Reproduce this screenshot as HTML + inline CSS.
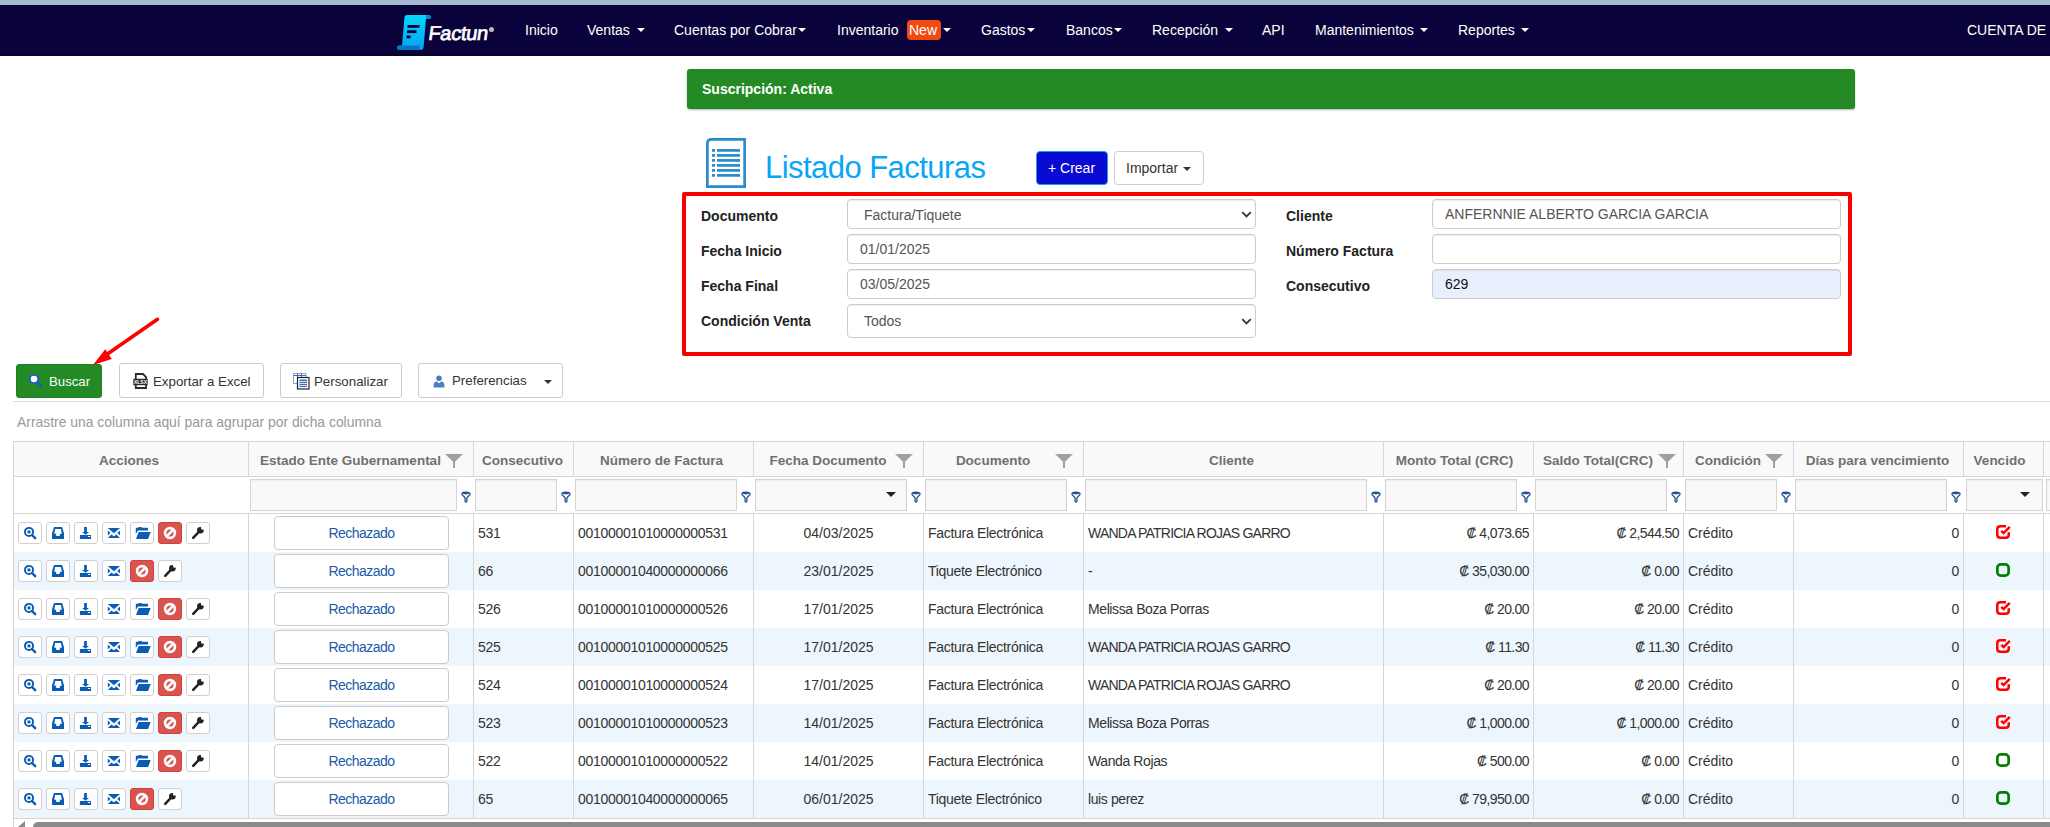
<!DOCTYPE html>
<html><head><meta charset="utf-8"><title>Listado Facturas</title>
<style>
html,body{margin:0;padding:0}
body{width:2050px;height:827px;overflow:hidden;position:relative;background:#fff;font-family:"Liberation Sans",sans-serif;color:#333}
.a{position:absolute;white-space:nowrap}
.a>svg,.ab>svg{display:block}
.nav{color:#fff;font-size:14px;line-height:16px}
.lbl{font-size:14px;font-weight:bold;color:#222;line-height:16px}
.inp{position:absolute;box-sizing:border-box;border:1px solid #ccc;border-radius:4px;background:#fff;box-shadow:inset 0 1px 1px rgba(0,0,0,.075);font-size:14px;color:#555;line-height:16px}
.btn{position:absolute;box-sizing:border-box;border:1px solid #ccc;border-radius:4px;background:#fff}
.hd{font-size:13.5px;font-weight:bold;color:#707070;line-height:16px}
.cell{font-size:14px;color:#333;line-height:16px;letter-spacing:-0.3px}
.ab{position:absolute;box-sizing:border-box;width:24px;height:22px;border:1px solid #d0d0d0;border-radius:3px;background:#fff;display:flex;align-items:center;justify-content:center}
.ab.r{background:#d9534f;border-color:#d43f3a}
.fi{position:absolute;box-sizing:border-box;border:1px solid #d5d5d5;background:#f9f9f9;box-shadow:inset 0 1px 2px rgba(0,0,0,.06);height:32px;top:479px}
</style></head><body>

<div class="a" style="left:0;top:0;width:2050px;height:5px;background:#a7b8d2"></div>
<div class="a" style="left:0;top:5px;width:2050px;height:50px;background:#0a033b"></div>
<div class="a" style="left:0;top:55px;width:2050px;height:1px;background:#05021c"></div>
<svg class="a" style="left:396px;top:14px" width="36" height="37" viewBox="0 0 36 37">
<defs><linearGradient id="lg" x1="0" y1="0" x2="0" y2="1"><stop offset="0" stop-color="#00d8ff"/><stop offset="1" stop-color="#0aa0f0"/></linearGradient></defs>
<path d="M8.5 3 Q9 1 11 1 L32 1 Q35 1 35 3.5 Q35 4.8 33 4.8 L30 4.8 L27.5 34 Q27 36 24.5 36 L4 36 Q1 36 1 33.8 Q1 31.5 4 31.5 L6 31.5 Z" fill="url(#lg)"/>
<path d="M1 33.8 Q1 31.5 4 31.5 L24 31.5 Q22 33 24.5 36 L4 36 Q1 36 1 33.8 Z" fill="#0872c4"/>
<path d="M30 1 Q35 1 35 3.5 Q35 4.8 33 4.8 L30 4.8 Z" fill="#0a86c8"/>
<rect x="11.5" y="11" width="12" height="2.8" fill="#0a033b"/>
<rect x="11" y="16.3" width="9.5" height="2.8" fill="#0a033b"/>
<rect x="10.5" y="21.5" width="4" height="2.8" fill="#0a033b"/>
</svg>
<div class="a" style="left:427px;top:21px;font-size:20px;line-height:24px;font-weight:normal;color:#fff;letter-spacing:-0.3px;-webkit-text-stroke:0.7px #fff;transform:skewX(-8deg);transform-origin:0 100%">Factun</div>
<div class="a" style="left:489px;top:27px;width:5px;height:5px;border-radius:50%;background:#b8b8cc"></div>
<div class="a nav" style="left:525px;top:22px">Inicio</div>
<div class="a nav" style="left:587px;top:22px">Ventas</div>
<div class="a" style="left:637px;top:28px;width:0;height:0;border-left:4.0px solid transparent;border-right:4.0px solid transparent;border-top:4px solid #fff"></div>
<div class="a nav" style="left:674px;top:22px">Cuentas por Cobrar</div>
<div class="a" style="left:798px;top:28px;width:0;height:0;border-left:4.0px solid transparent;border-right:4.0px solid transparent;border-top:4px solid #fff"></div>
<div class="a nav" style="left:837px;top:22px">Inventario</div>
<div class="a" style="left:943px;top:28px;width:0;height:0;border-left:4.0px solid transparent;border-right:4.0px solid transparent;border-top:4px solid #fff"></div>
<div class="a nav" style="left:981px;top:22px">Gastos</div>
<div class="a" style="left:1027px;top:28px;width:0;height:0;border-left:4.0px solid transparent;border-right:4.0px solid transparent;border-top:4px solid #fff"></div>
<div class="a nav" style="left:1066px;top:22px">Bancos</div>
<div class="a" style="left:1114px;top:28px;width:0;height:0;border-left:4.0px solid transparent;border-right:4.0px solid transparent;border-top:4px solid #fff"></div>
<div class="a nav" style="left:1152px;top:22px">Recepción</div>
<div class="a" style="left:1225px;top:28px;width:0;height:0;border-left:4.0px solid transparent;border-right:4.0px solid transparent;border-top:4px solid #fff"></div>
<div class="a nav" style="left:1262px;top:22px">API</div>
<div class="a nav" style="left:1315px;top:22px">Mantenimientos</div>
<div class="a" style="left:1420px;top:28px;width:0;height:0;border-left:4.0px solid transparent;border-right:4.0px solid transparent;border-top:4px solid #fff"></div>
<div class="a nav" style="left:1458px;top:22px">Reportes</div>
<div class="a" style="left:1521px;top:28px;width:0;height:0;border-left:4.0px solid transparent;border-right:4.0px solid transparent;border-top:4px solid #fff"></div>
<div class="a" style="left:907px;top:20px;width:34px;height:20px;border-radius:4px;background:#f04a12"></div>
<div class="a nav" style="left:909px;top:22px">New</div>
<div class="a nav" style="left:1967px;top:22px">CUENTA DE</div>
<div class="a" style="left:687px;top:69px;width:1168px;height:40px;background:#248a24;border-radius:3px;box-shadow:0 1px 2px rgba(0,0,0,.3)"></div>
<div class="a" style="left:702px;top:81px;font-size:14px;font-weight:bold;color:#fff;line-height:16px">Suscripción: Activa</div>
<svg class="a" style="left:706px;top:138px" width="40" height="50" viewBox="0 0 40 50"><path d="M1.35 48.65 V5.5 Q1.35 1.35 5.5 1.35 H38.65 V48.65 Z" fill="none" stroke="#2a8ad0" stroke-width="2.7"/><rect x="6" y="11.05" width="3" height="2.7" fill="#2a8ad0"/><rect x="11" y="11.05" width="23" height="2.7" fill="#2a8ad0"/><rect x="6" y="16.05" width="3" height="2.7" fill="#2a8ad0"/><rect x="11" y="16.05" width="23" height="2.7" fill="#2a8ad0"/><rect x="6" y="21.05" width="3" height="2.7" fill="#2a8ad0"/><rect x="11" y="21.05" width="23" height="2.7" fill="#2a8ad0"/><rect x="6" y="26.05" width="3" height="2.7" fill="#2a8ad0"/><rect x="11" y="26.05" width="23" height="2.7" fill="#2a8ad0"/><rect x="6" y="31.05" width="3" height="2.7" fill="#2a8ad0"/><rect x="11" y="31.05" width="23" height="2.7" fill="#2a8ad0"/><rect x="6" y="36.05" width="3" height="2.7" fill="#2a8ad0"/><rect x="11" y="36.05" width="23" height="2.7" fill="#2a8ad0"/></svg>
<div class="a" style="left:765px;top:150px;font-size:31px;line-height:36px;letter-spacing:-0.55px;color:#08a6f6">Listado Facturas</div>
<div class="btn" style="left:1036px;top:151px;width:72px;height:34px;background:#0a0ad0;border-color:#1aa0e0;border-radius:4px"></div>
<div class="a" style="left:1048px;top:160px;font-size:14px;line-height:16px;color:#fff">+ Crear</div>
<div class="btn" style="left:1114px;top:151px;width:90px;height:34px"></div>
<div class="a" style="left:1126px;top:160px;font-size:14px;line-height:16px;color:#333">Importar</div>
<div class="a" style="left:1183px;top:167px;width:0;height:0;border-left:4.0px solid transparent;border-right:4.0px solid transparent;border-top:4px solid #333"></div>
<div class="a" style="left:682px;top:192px;width:1170px;height:164px;box-sizing:border-box;border:4px solid #fa0000;border-radius:2px"></div>
<div class="a lbl" style="left:701px;top:208px">Documento</div>
<div class="a lbl" style="left:701px;top:243px">Fecha Inicio</div>
<div class="a lbl" style="left:701px;top:278px">Fecha Final</div>
<div class="a lbl" style="left:701px;top:313px">Condición Venta</div>
<div class="a lbl" style="left:1286px;top:208px">Cliente</div>
<div class="a lbl" style="left:1286px;top:243px">Número Factura</div>
<div class="a lbl" style="left:1286px;top:278px">Consecutivo</div>
<div class="inp" style="left:847px;top:199px;width:409px;height:30px"></div>
<div class="a" style="left:864px;top:207px;font-size:14px;line-height:16px;color:#555">Factura/Tiquete</div>
<svg class="a" width="11" height="7" viewBox="0 0 11 7" style="left:1241px;top:211px"><path d="M1.2 1.2 L5.5 5.5 L9.8 1.2" fill="none" stroke="#3a3a3a" stroke-width="1.9"/></svg>
<div class="inp" style="left:847px;top:234px;width:409px;height:30px"></div>
<div class="a" style="left:860px;top:241px;font-size:14px;line-height:16px;color:#555">01/01/2025</div>
<div class="inp" style="left:847px;top:269px;width:409px;height:30px"></div>
<div class="a" style="left:860px;top:276px;font-size:14px;line-height:16px;color:#555">03/05/2025</div>
<div class="inp" style="left:847px;top:304px;width:409px;height:34px"></div>
<div class="a" style="left:864px;top:313px;font-size:14px;line-height:16px;color:#555">Todos</div>
<svg class="a" width="11" height="7" viewBox="0 0 11 7" style="left:1241px;top:318px"><path d="M1.2 1.2 L5.5 5.5 L9.8 1.2" fill="none" stroke="#3a3a3a" stroke-width="1.9"/></svg>
<div class="inp" style="left:1432px;top:199px;width:409px;height:30px"></div>
<div class="a" style="left:1445px;top:206px;font-size:14px;line-height:16px;color:#555">ANFERNNIE ALBERTO GARCIA GARCIA</div>
<div class="inp" style="left:1432px;top:234px;width:409px;height:30px"></div>
<div class="inp" style="left:1432px;top:269px;width:409px;height:30px;background:#e8f0fe"></div>
<div class="a" style="left:1445px;top:276px;font-size:14px;line-height:16px;color:#111">629</div>
<svg class="a" style="left:80px;top:310px" width="90" height="65" viewBox="0 0 90 65"><path d="M77.5 9.3 L26 45" stroke="#ff0000" stroke-width="3.6" stroke-linecap="round"/><path d="M13 55 L25.3 39.3 L31.8 49.1 Z" fill="#ff0000"/></svg>
<div class="btn" style="left:16px;top:364px;width:86px;height:34px;background:#238a25;border-color:#1f8022;border-radius:3px"></div>
<svg class="a" style="left:28px;top:373px" width="15" height="15" viewBox="0 0 15 15"><circle cx="6" cy="6" r="4.2" fill="#fff" stroke="#2255cc" stroke-width="1.8"/><path d="M9.2 9.2 L13.5 13.3" stroke="#2255cc" stroke-width="2.2" stroke-linecap="round"/></svg>
<div class="a" style="left:49px;top:374px;font-size:13.2px;line-height:16px;color:#fff">Buscar</div>
<div class="btn" style="left:119px;top:363px;width:145px;height:35px;border-radius:3px"></div>
<svg class="a" style="left:133px;top:373px" width="15" height="16" viewBox="0 0 15 16"><path d="M2.8 1 H10 L13 4 V15 H2.8 Z" fill="#fff" stroke="#2a2a2a" stroke-width="1.8"/><rect x="0.3" y="5.8" width="14.4" height="6.4" fill="#2a2a2a"/><text x="7.5" y="11.2" font-size="6" font-family="Liberation Sans" font-weight="bold" fill="#fff" text-anchor="middle" textLength="13" lengthAdjust="spacingAndGlyphs">XLSX</text></svg>
<div class="a" style="left:153px;top:374px;font-size:13.3px;line-height:16px;color:#333">Exportar a Excel</div>
<div class="btn" style="left:280px;top:363px;width:122px;height:35px;border-radius:3px"></div>
<svg class="a" style="left:293px;top:373px" width="17" height="17" viewBox="0 0 17 17"><rect x="0.5" y="0.5" width="12.5" height="10" fill="#fff" stroke="#8aa8d8"/><path d="M0.5 2.5 H13 M4.5 0.5 V10.5 M8.5 0.5 V10.5" stroke="#3a6fb0" stroke-width="1"/><rect x="4.5" y="4.5" width="11.5" height="11.5" fill="#fff" stroke="#222" stroke-width="1.2"/><rect x="6.5" y="6.5" width="7.5" height="7.5" fill="#3a6fb0"/><path d="M6.5 8.5 H14 M6.5 10.5 H14 M6.5 12.5 H14" stroke="#fff" stroke-width="0.8"/></svg>
<div class="a" style="left:314px;top:374px;font-size:13.3px;line-height:16px;color:#333">Personalizar</div>
<div class="btn" style="left:418px;top:363px;width:145px;height:35px;border-radius:3px"></div>
<svg class="a" style="left:433px;top:374px" width="12" height="14" viewBox="0 0 12 14"><circle cx="6" cy="4.3" r="2.8" fill="#4a80c2"/><path d="M0.6 13.6 V11.6 Q0.6 7.6 3.6 7.4 L6 9.2 L8.4 7.4 Q11.4 7.6 11.4 11.6 V13.6 Z" fill="#4a80c2"/></svg>
<div class="a" style="left:452px;top:373px;font-size:13.3px;line-height:16px;color:#333">Preferencias</div>
<div class="a" style="left:544px;top:380px;width:0;height:0;border-left:4.0px solid transparent;border-right:4.0px solid transparent;border-top:4px solid #333"></div>
<div class="a" style="left:13px;top:401px;width:2037px;height:1px;background:#ddd"></div>
<div class="a" style="left:17px;top:414px;font-size:13.9px;line-height:16px;color:#999">Arrastre una columna aquí para agrupar por dicha columna</div>
<div class="a" style="left:13px;top:441px;width:2037px;height:36px;background:#f9f9f9"></div>
<div class="a" style="left:13px;top:441px;width:2037px;height:1px;background:#d6d6d6"></div>
<div class="a" style="left:13px;top:476px;width:2037px;height:1px;background:#d6d6d6"></div>
<div class="a" style="left:13px;top:513px;width:2037px;height:1px;background:#d6d6d6"></div>
<div class="a" style="left:14px;top:514px;width:2036px;height:38px;background:#fff"></div>
<div class="a" style="left:14px;top:552px;width:2036px;height:38px;background:#eef6fd"></div>
<div class="a" style="left:14px;top:590px;width:2036px;height:38px;background:#fff"></div>
<div class="a" style="left:14px;top:628px;width:2036px;height:38px;background:#eef6fd"></div>
<div class="a" style="left:14px;top:666px;width:2036px;height:38px;background:#fff"></div>
<div class="a" style="left:14px;top:704px;width:2036px;height:38px;background:#eef6fd"></div>
<div class="a" style="left:14px;top:742px;width:2036px;height:38px;background:#fff"></div>
<div class="a" style="left:14px;top:780px;width:2036px;height:38px;background:#eef6fd"></div>
<div class="a" style="left:13px;top:818px;width:2037px;height:1px;background:#d6d6d6"></div>
<div class="a" style="left:13px;top:441px;width:1px;height:386px;background:#d6d6d6"></div>
<div class="a" style="left:248px;top:441px;width:1px;height:36px;background:#d6d6d6"></div>
<div class="a" style="left:248px;top:513px;width:1px;height:306px;background:#d6d6d6"></div>
<div class="a" style="left:473px;top:441px;width:1px;height:36px;background:#d6d6d6"></div>
<div class="a" style="left:473px;top:513px;width:1px;height:306px;background:#d6d6d6"></div>
<div class="a" style="left:573px;top:441px;width:1px;height:36px;background:#d6d6d6"></div>
<div class="a" style="left:573px;top:513px;width:1px;height:306px;background:#d6d6d6"></div>
<div class="a" style="left:753px;top:441px;width:1px;height:36px;background:#d6d6d6"></div>
<div class="a" style="left:753px;top:513px;width:1px;height:306px;background:#d6d6d6"></div>
<div class="a" style="left:923px;top:441px;width:1px;height:36px;background:#d6d6d6"></div>
<div class="a" style="left:923px;top:513px;width:1px;height:306px;background:#d6d6d6"></div>
<div class="a" style="left:1083px;top:441px;width:1px;height:36px;background:#d6d6d6"></div>
<div class="a" style="left:1083px;top:513px;width:1px;height:306px;background:#d6d6d6"></div>
<div class="a" style="left:1383px;top:441px;width:1px;height:36px;background:#d6d6d6"></div>
<div class="a" style="left:1383px;top:513px;width:1px;height:306px;background:#d6d6d6"></div>
<div class="a" style="left:1533px;top:441px;width:1px;height:36px;background:#d6d6d6"></div>
<div class="a" style="left:1533px;top:513px;width:1px;height:306px;background:#d6d6d6"></div>
<div class="a" style="left:1683px;top:441px;width:1px;height:36px;background:#d6d6d6"></div>
<div class="a" style="left:1683px;top:513px;width:1px;height:306px;background:#d6d6d6"></div>
<div class="a" style="left:1793px;top:441px;width:1px;height:36px;background:#d6d6d6"></div>
<div class="a" style="left:1793px;top:513px;width:1px;height:306px;background:#d6d6d6"></div>
<div class="a" style="left:1963px;top:441px;width:1px;height:36px;background:#d6d6d6"></div>
<div class="a" style="left:1963px;top:513px;width:1px;height:306px;background:#d6d6d6"></div>
<div class="a" style="left:2043px;top:441px;width:1px;height:36px;background:#d6d6d6"></div>
<div class="a" style="left:2043px;top:513px;width:1px;height:306px;background:#d6d6d6"></div>
<div class="a hd" style="left:12px;top:453px;width:234px;text-align:center">Acciones</div>
<div class="a hd" style="left:256px;top:453px;width:189px;text-align:center">Estado Ente Gubernamental</div>
<div class="a" style="left:445px;top:454px"><svg width="18" height="14" viewBox="0 0 18 14"><path d="M0 0 H18 L10 7.8 V14 H8 V7.8 Z" fill="#a0a0a0"/></svg></div>
<div class="a hd" style="left:473px;top:453px;width:99px;text-align:center">Consecutivo</div>
<div class="a hd" style="left:572px;top:453px;width:179px;text-align:center">Número de Factura</div>
<div class="a hd" style="left:761px;top:453px;width:134px;text-align:center">Fecha Documento</div>
<div class="a" style="left:895px;top:454px"><svg width="18" height="14" viewBox="0 0 18 14"><path d="M0 0 H18 L10 7.8 V14 H8 V7.8 Z" fill="#a0a0a0"/></svg></div>
<div class="a hd" style="left:931px;top:453px;width:124px;text-align:center">Documento</div>
<div class="a" style="left:1055px;top:454px"><svg width="18" height="14" viewBox="0 0 18 14"><path d="M0 0 H18 L10 7.8 V14 H8 V7.8 Z" fill="#a0a0a0"/></svg></div>
<div class="a hd" style="left:1082px;top:453px;width:299px;text-align:center">Cliente</div>
<div class="a hd" style="left:1380px;top:453px;width:149px;text-align:center">Monto Total (CRC)</div>
<div class="a hd" style="left:1541px;top:453px;width:114px;text-align:center">Saldo Total(CRC)</div>
<div class="a" style="left:1658px;top:454px"><svg width="18" height="14" viewBox="0 0 18 14"><path d="M0 0 H18 L10 7.8 V14 H8 V7.8 Z" fill="#a0a0a0"/></svg></div>
<div class="a hd" style="left:1691px;top:453px;width:74px;text-align:center">Condición</div>
<div class="a" style="left:1765px;top:454px"><svg width="18" height="14" viewBox="0 0 18 14"><path d="M0 0 H18 L10 7.8 V14 H8 V7.8 Z" fill="#a0a0a0"/></svg></div>
<div class="a hd" style="left:1793px;top:453px;width:169px;text-align:center">Días para vencimiento</div>
<div class="a hd" style="left:1960px;top:453px;width:79px;text-align:center">Vencido</div>
<div class="fi" style="left:250px;width:207px"></div>
<div class="a" style="left:461px;top:491px"><svg width="10" height="12" viewBox="0 0 10 12"><path d="M0.9 3 C0.9 0.6 9.1 0.6 9.1 3 C9.1 4.6 6 5.8 5.9 7.2 V10.3 C5.9 11.4 4.1 11.4 4.1 10.3 V7.2 C4 5.8 0.9 4.6 0.9 3 Z" fill="none" stroke="#1f4e8c" stroke-width="1.3"/><path d="M2 2.4 C2.3 1 7.7 1 8 2.4 C7 3.6 3 3.6 2 2.4 Z" fill="#1f4e8c"/></svg></div>
<div class="fi" style="left:475px;width:82px"></div>
<div class="a" style="left:561px;top:491px"><svg width="10" height="12" viewBox="0 0 10 12"><path d="M0.9 3 C0.9 0.6 9.1 0.6 9.1 3 C9.1 4.6 6 5.8 5.9 7.2 V10.3 C5.9 11.4 4.1 11.4 4.1 10.3 V7.2 C4 5.8 0.9 4.6 0.9 3 Z" fill="none" stroke="#1f4e8c" stroke-width="1.3"/><path d="M2 2.4 C2.3 1 7.7 1 8 2.4 C7 3.6 3 3.6 2 2.4 Z" fill="#1f4e8c"/></svg></div>
<div class="fi" style="left:575px;width:162px"></div>
<div class="a" style="left:741px;top:491px"><svg width="10" height="12" viewBox="0 0 10 12"><path d="M0.9 3 C0.9 0.6 9.1 0.6 9.1 3 C9.1 4.6 6 5.8 5.9 7.2 V10.3 C5.9 11.4 4.1 11.4 4.1 10.3 V7.2 C4 5.8 0.9 4.6 0.9 3 Z" fill="none" stroke="#1f4e8c" stroke-width="1.3"/><path d="M2 2.4 C2.3 1 7.7 1 8 2.4 C7 3.6 3 3.6 2 2.4 Z" fill="#1f4e8c"/></svg></div>
<div class="fi" style="left:755px;width:152px"></div>
<div class="a" style="left:911px;top:491px"><svg width="10" height="12" viewBox="0 0 10 12"><path d="M0.9 3 C0.9 0.6 9.1 0.6 9.1 3 C9.1 4.6 6 5.8 5.9 7.2 V10.3 C5.9 11.4 4.1 11.4 4.1 10.3 V7.2 C4 5.8 0.9 4.6 0.9 3 Z" fill="none" stroke="#1f4e8c" stroke-width="1.3"/><path d="M2 2.4 C2.3 1 7.7 1 8 2.4 C7 3.6 3 3.6 2 2.4 Z" fill="#1f4e8c"/></svg></div>
<div class="fi" style="left:925px;width:142px"></div>
<div class="a" style="left:1071px;top:491px"><svg width="10" height="12" viewBox="0 0 10 12"><path d="M0.9 3 C0.9 0.6 9.1 0.6 9.1 3 C9.1 4.6 6 5.8 5.9 7.2 V10.3 C5.9 11.4 4.1 11.4 4.1 10.3 V7.2 C4 5.8 0.9 4.6 0.9 3 Z" fill="none" stroke="#1f4e8c" stroke-width="1.3"/><path d="M2 2.4 C2.3 1 7.7 1 8 2.4 C7 3.6 3 3.6 2 2.4 Z" fill="#1f4e8c"/></svg></div>
<div class="fi" style="left:1085px;width:282px"></div>
<div class="a" style="left:1371px;top:491px"><svg width="10" height="12" viewBox="0 0 10 12"><path d="M0.9 3 C0.9 0.6 9.1 0.6 9.1 3 C9.1 4.6 6 5.8 5.9 7.2 V10.3 C5.9 11.4 4.1 11.4 4.1 10.3 V7.2 C4 5.8 0.9 4.6 0.9 3 Z" fill="none" stroke="#1f4e8c" stroke-width="1.3"/><path d="M2 2.4 C2.3 1 7.7 1 8 2.4 C7 3.6 3 3.6 2 2.4 Z" fill="#1f4e8c"/></svg></div>
<div class="fi" style="left:1385px;width:132px"></div>
<div class="a" style="left:1521px;top:491px"><svg width="10" height="12" viewBox="0 0 10 12"><path d="M0.9 3 C0.9 0.6 9.1 0.6 9.1 3 C9.1 4.6 6 5.8 5.9 7.2 V10.3 C5.9 11.4 4.1 11.4 4.1 10.3 V7.2 C4 5.8 0.9 4.6 0.9 3 Z" fill="none" stroke="#1f4e8c" stroke-width="1.3"/><path d="M2 2.4 C2.3 1 7.7 1 8 2.4 C7 3.6 3 3.6 2 2.4 Z" fill="#1f4e8c"/></svg></div>
<div class="fi" style="left:1535px;width:132px"></div>
<div class="a" style="left:1671px;top:491px"><svg width="10" height="12" viewBox="0 0 10 12"><path d="M0.9 3 C0.9 0.6 9.1 0.6 9.1 3 C9.1 4.6 6 5.8 5.9 7.2 V10.3 C5.9 11.4 4.1 11.4 4.1 10.3 V7.2 C4 5.8 0.9 4.6 0.9 3 Z" fill="none" stroke="#1f4e8c" stroke-width="1.3"/><path d="M2 2.4 C2.3 1 7.7 1 8 2.4 C7 3.6 3 3.6 2 2.4 Z" fill="#1f4e8c"/></svg></div>
<div class="fi" style="left:1685px;width:92px"></div>
<div class="a" style="left:1781px;top:491px"><svg width="10" height="12" viewBox="0 0 10 12"><path d="M0.9 3 C0.9 0.6 9.1 0.6 9.1 3 C9.1 4.6 6 5.8 5.9 7.2 V10.3 C5.9 11.4 4.1 11.4 4.1 10.3 V7.2 C4 5.8 0.9 4.6 0.9 3 Z" fill="none" stroke="#1f4e8c" stroke-width="1.3"/><path d="M2 2.4 C2.3 1 7.7 1 8 2.4 C7 3.6 3 3.6 2 2.4 Z" fill="#1f4e8c"/></svg></div>
<div class="fi" style="left:1795px;width:152px"></div>
<div class="a" style="left:1951px;top:491px"><svg width="10" height="12" viewBox="0 0 10 12"><path d="M0.9 3 C0.9 0.6 9.1 0.6 9.1 3 C9.1 4.6 6 5.8 5.9 7.2 V10.3 C5.9 11.4 4.1 11.4 4.1 10.3 V7.2 C4 5.8 0.9 4.6 0.9 3 Z" fill="none" stroke="#1f4e8c" stroke-width="1.3"/><path d="M2 2.4 C2.3 1 7.7 1 8 2.4 C7 3.6 3 3.6 2 2.4 Z" fill="#1f4e8c"/></svg></div>
<div class="fi" style="left:1966px;width:77px"></div>
<div class="a" style="left:886px;top:492px;width:0;height:0;border-left:5.0px solid transparent;border-right:5.0px solid transparent;border-top:5px solid #222"></div>
<div class="a" style="left:2020px;top:492px;width:0;height:0;border-left:5.0px solid transparent;border-right:5.0px solid transparent;border-top:5px solid #222"></div>
<div class="fi" style="left:2046px;width:10px"></div>
<div class="ab" style="left:18px;top:522px"><svg width="14" height="14" viewBox="0 0 14 14"><circle cx="6" cy="5.9" r="4.05" fill="none" stroke="#0b5cb5" stroke-width="1.9"/><circle cx="6" cy="5.9" r="1.7" fill="#0b5cb5"/><path d="M9 9 L12.2 12.2" stroke="#0b5cb5" stroke-width="2.4" stroke-linecap="round"/></svg></div>
<div class="ab" style="left:46px;top:522px"><svg width="14" height="14" viewBox="0 0 14 14"><path d="M3 1.1 H11.1 L13 7.2 V12.9 H1 V7.2 Z M4.2 3.1 L3.2 7.8 H5 L5.3 9.9 H8.7 L9 7.8 H10.9 L9.9 3.1 Z" fill="#0b5cb5" fill-rule="evenodd"/></svg></div>
<div class="ab" style="left:74px;top:522px"><svg width="14" height="14" viewBox="0 0 14 14"><path d="M5.1 0.9 H7.9 V6.1 H10 L6.5 8.8 L3.1 6.1 H5.1 Z" fill="#0b5cb5"/><path d="M0.9 9.1 H12 V12.9 H0.9 Z M8.9 10 V11 H11.2 V10 Z" fill="#0b5cb5" fill-rule="evenodd"/></svg></div>
<div class="ab" style="left:102px;top:522px"><svg width="14" height="14" viewBox="0 0 14 14"><path d="M0.8 2 H13 L6.9 7.2 Z M0.8 4.5 V9.6 L3.5 7 Z M13 4.5 V9.6 L10.3 7 Z M0.8 11.9 L4.3 8.4 L6.9 10.3 L9.5 8.4 L13 11.9 Z" fill="#0b5cb5"/></svg></div>
<div class="ab" style="left:130px;top:522px"><svg width="18" height="14" viewBox="0 0 18 14"><path d="M2.8 2.2 Q2.8 1.8 3.3 1.8 H5 Q5.6 1.1 6.6 1.1 H8 Q8.8 1.1 9.2 1.8 H14.6 Q15.1 1.8 15.1 2.4 V4.6 H5 L2.8 8 Z" fill="#0b5cb5"/><path d="M5.7 6.1 H17.7 L15.1 12.9 H3 Z" fill="#0b5cb5"/></svg></div>
<div class="ab r" style="left:158px;top:522px"><svg width="14" height="14" viewBox="0 0 14 14"><circle cx="7" cy="7" r="4.9" fill="none" stroke="#fff" stroke-width="2.6"/><path d="M10.6 3.4 L3.4 10.6" stroke="#fff" stroke-width="2.6"/></svg></div>
<div class="ab" style="left:186px;top:522px"><svg width="14" height="14" viewBox="0 0 14 14"><path d="M2.2 11.8 L7.6 6.2" stroke="#222" stroke-width="2.5" stroke-linecap="round"/><circle cx="9.4" cy="4.3" r="3.3" fill="#222"/><circle cx="11.6" cy="2.1" r="1.7" fill="#fff"/><path d="M10.2 1 L13 3.8 L13.5 0 Z" fill="#fff"/></svg></div>
<div class="btn" style="left:274px;top:516px;width:175px;height:34px;display:flex;align-items:center;justify-content:center;font-size:14px;letter-spacing:-0.55px;color:#1a5aa8">Rechazado</div>
<div class="a cell" style="left:478px;top:525px">531</div>
<div class="a cell" style="left:578px;top:525px">00100001010000000531</div>
<div class="a cell" style="left:754px;top:525px;width:169px;text-align:center;letter-spacing:0">04/03/2025</div>
<div class="a cell" style="left:928px;top:525px">Factura Electrónica</div>
<div class="a cell" style="left:1088px;top:525px;letter-spacing:-0.78px">WANDA PATRICIA ROJAS GARRO</div>
<div class="a cell" style="left:1383px;top:525px;width:146px;text-align:right;letter-spacing:-0.6px">₡ 4,073.65</div>
<div class="a cell" style="left:1533px;top:525px;width:146px;text-align:right;letter-spacing:-0.6px">₡ 2,544.50</div>
<div class="a cell" style="left:1688px;top:525px;letter-spacing:0">Crédito</div>
<div class="a cell" style="left:1793px;top:525px;width:166px;text-align:right">0</div>
<svg class="a" style="left:1996px;top:525px" width="15" height="14" viewBox="0 0 15 14"><path d="M10 1.25 H4.25 Q1.25 1.25 1.25 4.25 V9.75 Q1.25 12.75 4.25 12.75 H9.75 Q12.75 12.75 12.75 9.75 V7.2" fill="none" stroke="#ff0000" stroke-width="2.5"/><path d="M5.3 5.8 L7.6 8.1 L13.8 1.9" fill="none" stroke="#ff0000" stroke-width="2.5"/></svg>
<div class="ab" style="left:18px;top:560px"><svg width="14" height="14" viewBox="0 0 14 14"><circle cx="6" cy="5.9" r="4.05" fill="none" stroke="#0b5cb5" stroke-width="1.9"/><circle cx="6" cy="5.9" r="1.7" fill="#0b5cb5"/><path d="M9 9 L12.2 12.2" stroke="#0b5cb5" stroke-width="2.4" stroke-linecap="round"/></svg></div>
<div class="ab" style="left:46px;top:560px"><svg width="14" height="14" viewBox="0 0 14 14"><path d="M3 1.1 H11.1 L13 7.2 V12.9 H1 V7.2 Z M4.2 3.1 L3.2 7.8 H5 L5.3 9.9 H8.7 L9 7.8 H10.9 L9.9 3.1 Z" fill="#0b5cb5" fill-rule="evenodd"/></svg></div>
<div class="ab" style="left:74px;top:560px"><svg width="14" height="14" viewBox="0 0 14 14"><path d="M5.1 0.9 H7.9 V6.1 H10 L6.5 8.8 L3.1 6.1 H5.1 Z" fill="#0b5cb5"/><path d="M0.9 9.1 H12 V12.9 H0.9 Z M8.9 10 V11 H11.2 V10 Z" fill="#0b5cb5" fill-rule="evenodd"/></svg></div>
<div class="ab" style="left:102px;top:560px"><svg width="14" height="14" viewBox="0 0 14 14"><path d="M0.8 2 H13 L6.9 7.2 Z M0.8 4.5 V9.6 L3.5 7 Z M13 4.5 V9.6 L10.3 7 Z M0.8 11.9 L4.3 8.4 L6.9 10.3 L9.5 8.4 L13 11.9 Z" fill="#0b5cb5"/></svg></div>
<div class="ab r" style="left:130px;top:560px"><svg width="14" height="14" viewBox="0 0 14 14"><circle cx="7" cy="7" r="4.9" fill="none" stroke="#fff" stroke-width="2.6"/><path d="M10.6 3.4 L3.4 10.6" stroke="#fff" stroke-width="2.6"/></svg></div>
<div class="ab" style="left:158px;top:560px"><svg width="14" height="14" viewBox="0 0 14 14"><path d="M2.2 11.8 L7.6 6.2" stroke="#222" stroke-width="2.5" stroke-linecap="round"/><circle cx="9.4" cy="4.3" r="3.3" fill="#222"/><circle cx="11.6" cy="2.1" r="1.7" fill="#fff"/><path d="M10.2 1 L13 3.8 L13.5 0 Z" fill="#fff"/></svg></div>
<div class="btn" style="left:274px;top:554px;width:175px;height:34px;display:flex;align-items:center;justify-content:center;font-size:14px;letter-spacing:-0.55px;color:#1a5aa8">Rechazado</div>
<div class="a cell" style="left:478px;top:563px">66</div>
<div class="a cell" style="left:578px;top:563px">00100001040000000066</div>
<div class="a cell" style="left:754px;top:563px;width:169px;text-align:center;letter-spacing:0">23/01/2025</div>
<div class="a cell" style="left:928px;top:563px">Tiquete Electrónico</div>
<div class="a cell" style="left:1088px;top:563px;letter-spacing:-0.4px">-</div>
<div class="a cell" style="left:1383px;top:563px;width:146px;text-align:right;letter-spacing:-0.6px">₡ 35,030.00</div>
<div class="a cell" style="left:1533px;top:563px;width:146px;text-align:right;letter-spacing:-0.6px">₡ 0.00</div>
<div class="a cell" style="left:1688px;top:563px;letter-spacing:0">Crédito</div>
<div class="a cell" style="left:1793px;top:563px;width:166px;text-align:right">0</div>
<svg class="a" style="left:1996px;top:563px" width="14" height="14" viewBox="0 0 14 14"><rect x="1.35" y="1.35" width="11.3" height="11.3" rx="3.5" fill="none" stroke="#008000" stroke-width="2.7"/></svg>
<div class="ab" style="left:18px;top:598px"><svg width="14" height="14" viewBox="0 0 14 14"><circle cx="6" cy="5.9" r="4.05" fill="none" stroke="#0b5cb5" stroke-width="1.9"/><circle cx="6" cy="5.9" r="1.7" fill="#0b5cb5"/><path d="M9 9 L12.2 12.2" stroke="#0b5cb5" stroke-width="2.4" stroke-linecap="round"/></svg></div>
<div class="ab" style="left:46px;top:598px"><svg width="14" height="14" viewBox="0 0 14 14"><path d="M3 1.1 H11.1 L13 7.2 V12.9 H1 V7.2 Z M4.2 3.1 L3.2 7.8 H5 L5.3 9.9 H8.7 L9 7.8 H10.9 L9.9 3.1 Z" fill="#0b5cb5" fill-rule="evenodd"/></svg></div>
<div class="ab" style="left:74px;top:598px"><svg width="14" height="14" viewBox="0 0 14 14"><path d="M5.1 0.9 H7.9 V6.1 H10 L6.5 8.8 L3.1 6.1 H5.1 Z" fill="#0b5cb5"/><path d="M0.9 9.1 H12 V12.9 H0.9 Z M8.9 10 V11 H11.2 V10 Z" fill="#0b5cb5" fill-rule="evenodd"/></svg></div>
<div class="ab" style="left:102px;top:598px"><svg width="14" height="14" viewBox="0 0 14 14"><path d="M0.8 2 H13 L6.9 7.2 Z M0.8 4.5 V9.6 L3.5 7 Z M13 4.5 V9.6 L10.3 7 Z M0.8 11.9 L4.3 8.4 L6.9 10.3 L9.5 8.4 L13 11.9 Z" fill="#0b5cb5"/></svg></div>
<div class="ab" style="left:130px;top:598px"><svg width="18" height="14" viewBox="0 0 18 14"><path d="M2.8 2.2 Q2.8 1.8 3.3 1.8 H5 Q5.6 1.1 6.6 1.1 H8 Q8.8 1.1 9.2 1.8 H14.6 Q15.1 1.8 15.1 2.4 V4.6 H5 L2.8 8 Z" fill="#0b5cb5"/><path d="M5.7 6.1 H17.7 L15.1 12.9 H3 Z" fill="#0b5cb5"/></svg></div>
<div class="ab r" style="left:158px;top:598px"><svg width="14" height="14" viewBox="0 0 14 14"><circle cx="7" cy="7" r="4.9" fill="none" stroke="#fff" stroke-width="2.6"/><path d="M10.6 3.4 L3.4 10.6" stroke="#fff" stroke-width="2.6"/></svg></div>
<div class="ab" style="left:186px;top:598px"><svg width="14" height="14" viewBox="0 0 14 14"><path d="M2.2 11.8 L7.6 6.2" stroke="#222" stroke-width="2.5" stroke-linecap="round"/><circle cx="9.4" cy="4.3" r="3.3" fill="#222"/><circle cx="11.6" cy="2.1" r="1.7" fill="#fff"/><path d="M10.2 1 L13 3.8 L13.5 0 Z" fill="#fff"/></svg></div>
<div class="btn" style="left:274px;top:592px;width:175px;height:34px;display:flex;align-items:center;justify-content:center;font-size:14px;letter-spacing:-0.55px;color:#1a5aa8">Rechazado</div>
<div class="a cell" style="left:478px;top:601px">526</div>
<div class="a cell" style="left:578px;top:601px">00100001010000000526</div>
<div class="a cell" style="left:754px;top:601px;width:169px;text-align:center;letter-spacing:0">17/01/2025</div>
<div class="a cell" style="left:928px;top:601px">Factura Electrónica</div>
<div class="a cell" style="left:1088px;top:601px;letter-spacing:-0.4px">Melissa Boza Porras</div>
<div class="a cell" style="left:1383px;top:601px;width:146px;text-align:right;letter-spacing:-0.6px">₡ 20.00</div>
<div class="a cell" style="left:1533px;top:601px;width:146px;text-align:right;letter-spacing:-0.6px">₡ 20.00</div>
<div class="a cell" style="left:1688px;top:601px;letter-spacing:0">Crédito</div>
<div class="a cell" style="left:1793px;top:601px;width:166px;text-align:right">0</div>
<svg class="a" style="left:1996px;top:601px" width="15" height="14" viewBox="0 0 15 14"><path d="M10 1.25 H4.25 Q1.25 1.25 1.25 4.25 V9.75 Q1.25 12.75 4.25 12.75 H9.75 Q12.75 12.75 12.75 9.75 V7.2" fill="none" stroke="#ff0000" stroke-width="2.5"/><path d="M5.3 5.8 L7.6 8.1 L13.8 1.9" fill="none" stroke="#ff0000" stroke-width="2.5"/></svg>
<div class="ab" style="left:18px;top:636px"><svg width="14" height="14" viewBox="0 0 14 14"><circle cx="6" cy="5.9" r="4.05" fill="none" stroke="#0b5cb5" stroke-width="1.9"/><circle cx="6" cy="5.9" r="1.7" fill="#0b5cb5"/><path d="M9 9 L12.2 12.2" stroke="#0b5cb5" stroke-width="2.4" stroke-linecap="round"/></svg></div>
<div class="ab" style="left:46px;top:636px"><svg width="14" height="14" viewBox="0 0 14 14"><path d="M3 1.1 H11.1 L13 7.2 V12.9 H1 V7.2 Z M4.2 3.1 L3.2 7.8 H5 L5.3 9.9 H8.7 L9 7.8 H10.9 L9.9 3.1 Z" fill="#0b5cb5" fill-rule="evenodd"/></svg></div>
<div class="ab" style="left:74px;top:636px"><svg width="14" height="14" viewBox="0 0 14 14"><path d="M5.1 0.9 H7.9 V6.1 H10 L6.5 8.8 L3.1 6.1 H5.1 Z" fill="#0b5cb5"/><path d="M0.9 9.1 H12 V12.9 H0.9 Z M8.9 10 V11 H11.2 V10 Z" fill="#0b5cb5" fill-rule="evenodd"/></svg></div>
<div class="ab" style="left:102px;top:636px"><svg width="14" height="14" viewBox="0 0 14 14"><path d="M0.8 2 H13 L6.9 7.2 Z M0.8 4.5 V9.6 L3.5 7 Z M13 4.5 V9.6 L10.3 7 Z M0.8 11.9 L4.3 8.4 L6.9 10.3 L9.5 8.4 L13 11.9 Z" fill="#0b5cb5"/></svg></div>
<div class="ab" style="left:130px;top:636px"><svg width="18" height="14" viewBox="0 0 18 14"><path d="M2.8 2.2 Q2.8 1.8 3.3 1.8 H5 Q5.6 1.1 6.6 1.1 H8 Q8.8 1.1 9.2 1.8 H14.6 Q15.1 1.8 15.1 2.4 V4.6 H5 L2.8 8 Z" fill="#0b5cb5"/><path d="M5.7 6.1 H17.7 L15.1 12.9 H3 Z" fill="#0b5cb5"/></svg></div>
<div class="ab r" style="left:158px;top:636px"><svg width="14" height="14" viewBox="0 0 14 14"><circle cx="7" cy="7" r="4.9" fill="none" stroke="#fff" stroke-width="2.6"/><path d="M10.6 3.4 L3.4 10.6" stroke="#fff" stroke-width="2.6"/></svg></div>
<div class="ab" style="left:186px;top:636px"><svg width="14" height="14" viewBox="0 0 14 14"><path d="M2.2 11.8 L7.6 6.2" stroke="#222" stroke-width="2.5" stroke-linecap="round"/><circle cx="9.4" cy="4.3" r="3.3" fill="#222"/><circle cx="11.6" cy="2.1" r="1.7" fill="#fff"/><path d="M10.2 1 L13 3.8 L13.5 0 Z" fill="#fff"/></svg></div>
<div class="btn" style="left:274px;top:630px;width:175px;height:34px;display:flex;align-items:center;justify-content:center;font-size:14px;letter-spacing:-0.55px;color:#1a5aa8">Rechazado</div>
<div class="a cell" style="left:478px;top:639px">525</div>
<div class="a cell" style="left:578px;top:639px">00100001010000000525</div>
<div class="a cell" style="left:754px;top:639px;width:169px;text-align:center;letter-spacing:0">17/01/2025</div>
<div class="a cell" style="left:928px;top:639px">Factura Electrónica</div>
<div class="a cell" style="left:1088px;top:639px;letter-spacing:-0.78px">WANDA PATRICIA ROJAS GARRO</div>
<div class="a cell" style="left:1383px;top:639px;width:146px;text-align:right;letter-spacing:-0.6px">₡ 11.30</div>
<div class="a cell" style="left:1533px;top:639px;width:146px;text-align:right;letter-spacing:-0.6px">₡ 11.30</div>
<div class="a cell" style="left:1688px;top:639px;letter-spacing:0">Crédito</div>
<div class="a cell" style="left:1793px;top:639px;width:166px;text-align:right">0</div>
<svg class="a" style="left:1996px;top:639px" width="15" height="14" viewBox="0 0 15 14"><path d="M10 1.25 H4.25 Q1.25 1.25 1.25 4.25 V9.75 Q1.25 12.75 4.25 12.75 H9.75 Q12.75 12.75 12.75 9.75 V7.2" fill="none" stroke="#ff0000" stroke-width="2.5"/><path d="M5.3 5.8 L7.6 8.1 L13.8 1.9" fill="none" stroke="#ff0000" stroke-width="2.5"/></svg>
<div class="ab" style="left:18px;top:674px"><svg width="14" height="14" viewBox="0 0 14 14"><circle cx="6" cy="5.9" r="4.05" fill="none" stroke="#0b5cb5" stroke-width="1.9"/><circle cx="6" cy="5.9" r="1.7" fill="#0b5cb5"/><path d="M9 9 L12.2 12.2" stroke="#0b5cb5" stroke-width="2.4" stroke-linecap="round"/></svg></div>
<div class="ab" style="left:46px;top:674px"><svg width="14" height="14" viewBox="0 0 14 14"><path d="M3 1.1 H11.1 L13 7.2 V12.9 H1 V7.2 Z M4.2 3.1 L3.2 7.8 H5 L5.3 9.9 H8.7 L9 7.8 H10.9 L9.9 3.1 Z" fill="#0b5cb5" fill-rule="evenodd"/></svg></div>
<div class="ab" style="left:74px;top:674px"><svg width="14" height="14" viewBox="0 0 14 14"><path d="M5.1 0.9 H7.9 V6.1 H10 L6.5 8.8 L3.1 6.1 H5.1 Z" fill="#0b5cb5"/><path d="M0.9 9.1 H12 V12.9 H0.9 Z M8.9 10 V11 H11.2 V10 Z" fill="#0b5cb5" fill-rule="evenodd"/></svg></div>
<div class="ab" style="left:102px;top:674px"><svg width="14" height="14" viewBox="0 0 14 14"><path d="M0.8 2 H13 L6.9 7.2 Z M0.8 4.5 V9.6 L3.5 7 Z M13 4.5 V9.6 L10.3 7 Z M0.8 11.9 L4.3 8.4 L6.9 10.3 L9.5 8.4 L13 11.9 Z" fill="#0b5cb5"/></svg></div>
<div class="ab" style="left:130px;top:674px"><svg width="18" height="14" viewBox="0 0 18 14"><path d="M2.8 2.2 Q2.8 1.8 3.3 1.8 H5 Q5.6 1.1 6.6 1.1 H8 Q8.8 1.1 9.2 1.8 H14.6 Q15.1 1.8 15.1 2.4 V4.6 H5 L2.8 8 Z" fill="#0b5cb5"/><path d="M5.7 6.1 H17.7 L15.1 12.9 H3 Z" fill="#0b5cb5"/></svg></div>
<div class="ab r" style="left:158px;top:674px"><svg width="14" height="14" viewBox="0 0 14 14"><circle cx="7" cy="7" r="4.9" fill="none" stroke="#fff" stroke-width="2.6"/><path d="M10.6 3.4 L3.4 10.6" stroke="#fff" stroke-width="2.6"/></svg></div>
<div class="ab" style="left:186px;top:674px"><svg width="14" height="14" viewBox="0 0 14 14"><path d="M2.2 11.8 L7.6 6.2" stroke="#222" stroke-width="2.5" stroke-linecap="round"/><circle cx="9.4" cy="4.3" r="3.3" fill="#222"/><circle cx="11.6" cy="2.1" r="1.7" fill="#fff"/><path d="M10.2 1 L13 3.8 L13.5 0 Z" fill="#fff"/></svg></div>
<div class="btn" style="left:274px;top:668px;width:175px;height:34px;display:flex;align-items:center;justify-content:center;font-size:14px;letter-spacing:-0.55px;color:#1a5aa8">Rechazado</div>
<div class="a cell" style="left:478px;top:677px">524</div>
<div class="a cell" style="left:578px;top:677px">00100001010000000524</div>
<div class="a cell" style="left:754px;top:677px;width:169px;text-align:center;letter-spacing:0">17/01/2025</div>
<div class="a cell" style="left:928px;top:677px">Factura Electrónica</div>
<div class="a cell" style="left:1088px;top:677px;letter-spacing:-0.78px">WANDA PATRICIA ROJAS GARRO</div>
<div class="a cell" style="left:1383px;top:677px;width:146px;text-align:right;letter-spacing:-0.6px">₡ 20.00</div>
<div class="a cell" style="left:1533px;top:677px;width:146px;text-align:right;letter-spacing:-0.6px">₡ 20.00</div>
<div class="a cell" style="left:1688px;top:677px;letter-spacing:0">Crédito</div>
<div class="a cell" style="left:1793px;top:677px;width:166px;text-align:right">0</div>
<svg class="a" style="left:1996px;top:677px" width="15" height="14" viewBox="0 0 15 14"><path d="M10 1.25 H4.25 Q1.25 1.25 1.25 4.25 V9.75 Q1.25 12.75 4.25 12.75 H9.75 Q12.75 12.75 12.75 9.75 V7.2" fill="none" stroke="#ff0000" stroke-width="2.5"/><path d="M5.3 5.8 L7.6 8.1 L13.8 1.9" fill="none" stroke="#ff0000" stroke-width="2.5"/></svg>
<div class="ab" style="left:18px;top:712px"><svg width="14" height="14" viewBox="0 0 14 14"><circle cx="6" cy="5.9" r="4.05" fill="none" stroke="#0b5cb5" stroke-width="1.9"/><circle cx="6" cy="5.9" r="1.7" fill="#0b5cb5"/><path d="M9 9 L12.2 12.2" stroke="#0b5cb5" stroke-width="2.4" stroke-linecap="round"/></svg></div>
<div class="ab" style="left:46px;top:712px"><svg width="14" height="14" viewBox="0 0 14 14"><path d="M3 1.1 H11.1 L13 7.2 V12.9 H1 V7.2 Z M4.2 3.1 L3.2 7.8 H5 L5.3 9.9 H8.7 L9 7.8 H10.9 L9.9 3.1 Z" fill="#0b5cb5" fill-rule="evenodd"/></svg></div>
<div class="ab" style="left:74px;top:712px"><svg width="14" height="14" viewBox="0 0 14 14"><path d="M5.1 0.9 H7.9 V6.1 H10 L6.5 8.8 L3.1 6.1 H5.1 Z" fill="#0b5cb5"/><path d="M0.9 9.1 H12 V12.9 H0.9 Z M8.9 10 V11 H11.2 V10 Z" fill="#0b5cb5" fill-rule="evenodd"/></svg></div>
<div class="ab" style="left:102px;top:712px"><svg width="14" height="14" viewBox="0 0 14 14"><path d="M0.8 2 H13 L6.9 7.2 Z M0.8 4.5 V9.6 L3.5 7 Z M13 4.5 V9.6 L10.3 7 Z M0.8 11.9 L4.3 8.4 L6.9 10.3 L9.5 8.4 L13 11.9 Z" fill="#0b5cb5"/></svg></div>
<div class="ab" style="left:130px;top:712px"><svg width="18" height="14" viewBox="0 0 18 14"><path d="M2.8 2.2 Q2.8 1.8 3.3 1.8 H5 Q5.6 1.1 6.6 1.1 H8 Q8.8 1.1 9.2 1.8 H14.6 Q15.1 1.8 15.1 2.4 V4.6 H5 L2.8 8 Z" fill="#0b5cb5"/><path d="M5.7 6.1 H17.7 L15.1 12.9 H3 Z" fill="#0b5cb5"/></svg></div>
<div class="ab r" style="left:158px;top:712px"><svg width="14" height="14" viewBox="0 0 14 14"><circle cx="7" cy="7" r="4.9" fill="none" stroke="#fff" stroke-width="2.6"/><path d="M10.6 3.4 L3.4 10.6" stroke="#fff" stroke-width="2.6"/></svg></div>
<div class="ab" style="left:186px;top:712px"><svg width="14" height="14" viewBox="0 0 14 14"><path d="M2.2 11.8 L7.6 6.2" stroke="#222" stroke-width="2.5" stroke-linecap="round"/><circle cx="9.4" cy="4.3" r="3.3" fill="#222"/><circle cx="11.6" cy="2.1" r="1.7" fill="#fff"/><path d="M10.2 1 L13 3.8 L13.5 0 Z" fill="#fff"/></svg></div>
<div class="btn" style="left:274px;top:706px;width:175px;height:34px;display:flex;align-items:center;justify-content:center;font-size:14px;letter-spacing:-0.55px;color:#1a5aa8">Rechazado</div>
<div class="a cell" style="left:478px;top:715px">523</div>
<div class="a cell" style="left:578px;top:715px">00100001010000000523</div>
<div class="a cell" style="left:754px;top:715px;width:169px;text-align:center;letter-spacing:0">14/01/2025</div>
<div class="a cell" style="left:928px;top:715px">Factura Electrónica</div>
<div class="a cell" style="left:1088px;top:715px;letter-spacing:-0.4px">Melissa Boza Porras</div>
<div class="a cell" style="left:1383px;top:715px;width:146px;text-align:right;letter-spacing:-0.6px">₡ 1,000.00</div>
<div class="a cell" style="left:1533px;top:715px;width:146px;text-align:right;letter-spacing:-0.6px">₡ 1,000.00</div>
<div class="a cell" style="left:1688px;top:715px;letter-spacing:0">Crédito</div>
<div class="a cell" style="left:1793px;top:715px;width:166px;text-align:right">0</div>
<svg class="a" style="left:1996px;top:715px" width="15" height="14" viewBox="0 0 15 14"><path d="M10 1.25 H4.25 Q1.25 1.25 1.25 4.25 V9.75 Q1.25 12.75 4.25 12.75 H9.75 Q12.75 12.75 12.75 9.75 V7.2" fill="none" stroke="#ff0000" stroke-width="2.5"/><path d="M5.3 5.8 L7.6 8.1 L13.8 1.9" fill="none" stroke="#ff0000" stroke-width="2.5"/></svg>
<div class="ab" style="left:18px;top:750px"><svg width="14" height="14" viewBox="0 0 14 14"><circle cx="6" cy="5.9" r="4.05" fill="none" stroke="#0b5cb5" stroke-width="1.9"/><circle cx="6" cy="5.9" r="1.7" fill="#0b5cb5"/><path d="M9 9 L12.2 12.2" stroke="#0b5cb5" stroke-width="2.4" stroke-linecap="round"/></svg></div>
<div class="ab" style="left:46px;top:750px"><svg width="14" height="14" viewBox="0 0 14 14"><path d="M3 1.1 H11.1 L13 7.2 V12.9 H1 V7.2 Z M4.2 3.1 L3.2 7.8 H5 L5.3 9.9 H8.7 L9 7.8 H10.9 L9.9 3.1 Z" fill="#0b5cb5" fill-rule="evenodd"/></svg></div>
<div class="ab" style="left:74px;top:750px"><svg width="14" height="14" viewBox="0 0 14 14"><path d="M5.1 0.9 H7.9 V6.1 H10 L6.5 8.8 L3.1 6.1 H5.1 Z" fill="#0b5cb5"/><path d="M0.9 9.1 H12 V12.9 H0.9 Z M8.9 10 V11 H11.2 V10 Z" fill="#0b5cb5" fill-rule="evenodd"/></svg></div>
<div class="ab" style="left:102px;top:750px"><svg width="14" height="14" viewBox="0 0 14 14"><path d="M0.8 2 H13 L6.9 7.2 Z M0.8 4.5 V9.6 L3.5 7 Z M13 4.5 V9.6 L10.3 7 Z M0.8 11.9 L4.3 8.4 L6.9 10.3 L9.5 8.4 L13 11.9 Z" fill="#0b5cb5"/></svg></div>
<div class="ab" style="left:130px;top:750px"><svg width="18" height="14" viewBox="0 0 18 14"><path d="M2.8 2.2 Q2.8 1.8 3.3 1.8 H5 Q5.6 1.1 6.6 1.1 H8 Q8.8 1.1 9.2 1.8 H14.6 Q15.1 1.8 15.1 2.4 V4.6 H5 L2.8 8 Z" fill="#0b5cb5"/><path d="M5.7 6.1 H17.7 L15.1 12.9 H3 Z" fill="#0b5cb5"/></svg></div>
<div class="ab r" style="left:158px;top:750px"><svg width="14" height="14" viewBox="0 0 14 14"><circle cx="7" cy="7" r="4.9" fill="none" stroke="#fff" stroke-width="2.6"/><path d="M10.6 3.4 L3.4 10.6" stroke="#fff" stroke-width="2.6"/></svg></div>
<div class="ab" style="left:186px;top:750px"><svg width="14" height="14" viewBox="0 0 14 14"><path d="M2.2 11.8 L7.6 6.2" stroke="#222" stroke-width="2.5" stroke-linecap="round"/><circle cx="9.4" cy="4.3" r="3.3" fill="#222"/><circle cx="11.6" cy="2.1" r="1.7" fill="#fff"/><path d="M10.2 1 L13 3.8 L13.5 0 Z" fill="#fff"/></svg></div>
<div class="btn" style="left:274px;top:744px;width:175px;height:34px;display:flex;align-items:center;justify-content:center;font-size:14px;letter-spacing:-0.55px;color:#1a5aa8">Rechazado</div>
<div class="a cell" style="left:478px;top:753px">522</div>
<div class="a cell" style="left:578px;top:753px">00100001010000000522</div>
<div class="a cell" style="left:754px;top:753px;width:169px;text-align:center;letter-spacing:0">14/01/2025</div>
<div class="a cell" style="left:928px;top:753px">Factura Electrónica</div>
<div class="a cell" style="left:1088px;top:753px;letter-spacing:-0.4px">Wanda Rojas</div>
<div class="a cell" style="left:1383px;top:753px;width:146px;text-align:right;letter-spacing:-0.6px">₡ 500.00</div>
<div class="a cell" style="left:1533px;top:753px;width:146px;text-align:right;letter-spacing:-0.6px">₡ 0.00</div>
<div class="a cell" style="left:1688px;top:753px;letter-spacing:0">Crédito</div>
<div class="a cell" style="left:1793px;top:753px;width:166px;text-align:right">0</div>
<svg class="a" style="left:1996px;top:753px" width="14" height="14" viewBox="0 0 14 14"><rect x="1.35" y="1.35" width="11.3" height="11.3" rx="3.5" fill="none" stroke="#008000" stroke-width="2.7"/></svg>
<div class="ab" style="left:18px;top:788px"><svg width="14" height="14" viewBox="0 0 14 14"><circle cx="6" cy="5.9" r="4.05" fill="none" stroke="#0b5cb5" stroke-width="1.9"/><circle cx="6" cy="5.9" r="1.7" fill="#0b5cb5"/><path d="M9 9 L12.2 12.2" stroke="#0b5cb5" stroke-width="2.4" stroke-linecap="round"/></svg></div>
<div class="ab" style="left:46px;top:788px"><svg width="14" height="14" viewBox="0 0 14 14"><path d="M3 1.1 H11.1 L13 7.2 V12.9 H1 V7.2 Z M4.2 3.1 L3.2 7.8 H5 L5.3 9.9 H8.7 L9 7.8 H10.9 L9.9 3.1 Z" fill="#0b5cb5" fill-rule="evenodd"/></svg></div>
<div class="ab" style="left:74px;top:788px"><svg width="14" height="14" viewBox="0 0 14 14"><path d="M5.1 0.9 H7.9 V6.1 H10 L6.5 8.8 L3.1 6.1 H5.1 Z" fill="#0b5cb5"/><path d="M0.9 9.1 H12 V12.9 H0.9 Z M8.9 10 V11 H11.2 V10 Z" fill="#0b5cb5" fill-rule="evenodd"/></svg></div>
<div class="ab" style="left:102px;top:788px"><svg width="14" height="14" viewBox="0 0 14 14"><path d="M0.8 2 H13 L6.9 7.2 Z M0.8 4.5 V9.6 L3.5 7 Z M13 4.5 V9.6 L10.3 7 Z M0.8 11.9 L4.3 8.4 L6.9 10.3 L9.5 8.4 L13 11.9 Z" fill="#0b5cb5"/></svg></div>
<div class="ab r" style="left:130px;top:788px"><svg width="14" height="14" viewBox="0 0 14 14"><circle cx="7" cy="7" r="4.9" fill="none" stroke="#fff" stroke-width="2.6"/><path d="M10.6 3.4 L3.4 10.6" stroke="#fff" stroke-width="2.6"/></svg></div>
<div class="ab" style="left:158px;top:788px"><svg width="14" height="14" viewBox="0 0 14 14"><path d="M2.2 11.8 L7.6 6.2" stroke="#222" stroke-width="2.5" stroke-linecap="round"/><circle cx="9.4" cy="4.3" r="3.3" fill="#222"/><circle cx="11.6" cy="2.1" r="1.7" fill="#fff"/><path d="M10.2 1 L13 3.8 L13.5 0 Z" fill="#fff"/></svg></div>
<div class="btn" style="left:274px;top:782px;width:175px;height:34px;display:flex;align-items:center;justify-content:center;font-size:14px;letter-spacing:-0.55px;color:#1a5aa8">Rechazado</div>
<div class="a cell" style="left:478px;top:791px">65</div>
<div class="a cell" style="left:578px;top:791px">00100001040000000065</div>
<div class="a cell" style="left:754px;top:791px;width:169px;text-align:center;letter-spacing:0">06/01/2025</div>
<div class="a cell" style="left:928px;top:791px">Tiquete Electrónico</div>
<div class="a cell" style="left:1088px;top:791px;letter-spacing:-0.4px">luis perez</div>
<div class="a cell" style="left:1383px;top:791px;width:146px;text-align:right;letter-spacing:-0.6px">₡ 79,950.00</div>
<div class="a cell" style="left:1533px;top:791px;width:146px;text-align:right;letter-spacing:-0.6px">₡ 0.00</div>
<div class="a cell" style="left:1688px;top:791px;letter-spacing:0">Crédito</div>
<div class="a cell" style="left:1793px;top:791px;width:166px;text-align:right">0</div>
<svg class="a" style="left:1996px;top:791px" width="14" height="14" viewBox="0 0 14 14"><rect x="1.35" y="1.35" width="11.3" height="11.3" rx="3.5" fill="none" stroke="#008000" stroke-width="2.7"/></svg>
<div class="a" style="left:14px;top:819px;width:2036px;height:8px;background:#fff"></div>
<div class="a" style="left:33px;top:822px;width:2030px;height:10px;border-radius:5px;background:#8a8a8a"></div>
<div class="a" style="left:18px;top:821px;width:0;height:0;border-top:6px solid transparent;border-bottom:6px solid transparent;border-right:7px solid #8a8a8a"></div>
</body></html>
